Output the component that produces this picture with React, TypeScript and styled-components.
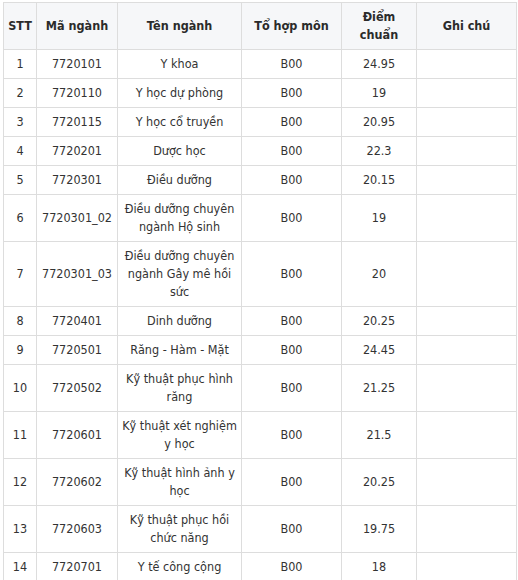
import React from "react";
import styled, { createGlobalStyle } from "styled-components";

const Global = createGlobalStyle`
  html, body { margin: 0; padding: 0; background: #ffffff; }
  body { font-family: "DejaVu Sans Condensed", "DejaVu Sans", sans-serif; color: #333333; }
`;

const Page = styled.div`
  padding: 2px 0 0 3px;
`;

const Table = styled.table`
  border-collapse: collapse;
  table-layout: fixed;
  width: 514px;
  font-size: 12.5px;
  line-height: 18px;
`;

const HeadCell = styled.th`
  border: 1px solid #dddddd;
  background: #f6f7f9;
  color: #2b2b2b;
  font-weight: bold;
  text-align: center;
  vertical-align: middle;
  padding: 5px 4px;
  white-space: pre;
`;

const Cell = styled.td`
  border: 1px solid #dddddd;
  text-align: center;
  vertical-align: middle;
  padding: 5px 4px;
  white-space: pre;
`;

type Row = [string, string, string, string, string];

const rows: Row[] = [
  ["1", "7720101", "Y khoa", "B00", "24.95"],
  ["2", "7720110", "Y học dự phòng", "B00", "19"],
  ["3", "7720115", "Y học cổ truyền", "B00", "20.95"],
  ["4", "7720201", "Dược học", "B00", "22.3"],
  ["5", "7720301", "Điều dưỡng", "B00", "20.15"],
  ["6", "7720301_02", "Điều dưỡng chuyên\nngành Hộ sinh", "B00", "19"],
  ["7", "7720301_03", "Điều dưỡng chuyên\nngành Gây mê hồi\nsức", "B00", "20"],
  ["8", "7720401", "Dinh dưỡng", "B00", "20.25"],
  ["9", "7720501", "Răng - Hàm - Mặt", "B00", "24.45"],
  ["10", "7720502", "Kỹ thuật phục hình\nrăng", "B00", "21.25"],
  ["11", "7720601", "Kỹ thuật xét nghiệm\ny học", "B00", "21.5"],
  ["12", "7720602", "Kỹ thuật hình ảnh y\nhọc", "B00", "20.25"],
  ["13", "7720603", "Kỹ thuật phục hồi\nchức năng", "B00", "19.75"],
  ["14", "7720701", "Y tế công cộng", "B00", "18"],
];

const widths = [33, 81, 124, 100, 75, 100];

export default function App() {
  return (
    <Page>
      <Global />
      <Table>
        <colgroup>
          {widths.map((w, i) => (
            <col key={i} style={{ width: w }} />
          ))}
        </colgroup>
        <thead>
          <tr>
            <HeadCell>STT</HeadCell>
            <HeadCell>Mã ngành</HeadCell>
            <HeadCell>Tên ngành</HeadCell>
            <HeadCell>Tổ hợp môn</HeadCell>
            <HeadCell>{"Điểm\nchuẩn"}</HeadCell>
            <HeadCell>Ghi chú</HeadCell>
          </tr>
        </thead>
        <tbody>
          {rows.map((r) => (
            <tr key={r[0]}>
              {r.map((c, i) => (
                <Cell key={i}>{c}</Cell>
              ))}
              <Cell />
            </tr>
          ))}
        </tbody>
      </Table>
    </Page>
  );
}
